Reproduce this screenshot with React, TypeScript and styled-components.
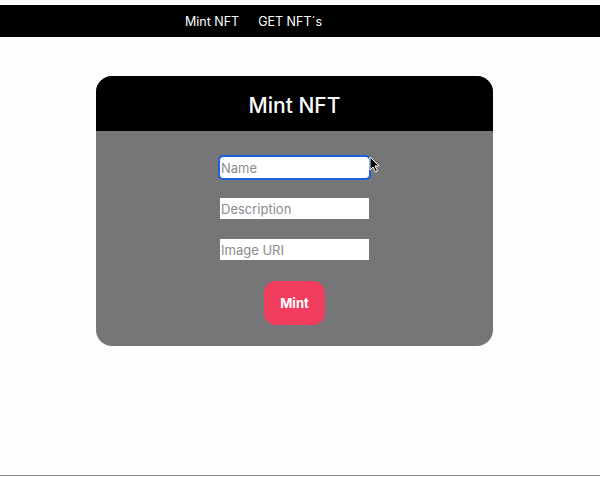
import React from 'react';
import styled, { createGlobalStyle } from 'styled-components';

const GlobalStyle = createGlobalStyle`
  html, body {
    margin: 0;
    padding: 0;
    background: #fdfcfe;
    font-family: Inter, "Liberation Sans", Arial, sans-serif;
  }
`;

const Page = styled.div`
  height: 476px;
  border-bottom: 1px solid #8a898c;
  padding-top: 5px;
  box-sizing: border-box;
`;

const NavBar = styled.nav`
  height: 32px;
  background: #000;
  display: flex;
  align-items: center;
  padding-left: 185px;
  gap: 19px;
`;

const NavLink = styled.a`
  color: #fff;
  font-size: 12.5px;
  text-decoration: none;
  cursor: pointer;
`;

const Card = styled.section`
  width: 397px;
  margin: 39px 0 0 96px;
  border-radius: 16px;
  overflow: hidden;
  background: #767577;
`;

const CardHeader = styled.h1`
  margin: 0;
  height: 55px;
  background: #000;
  color: #fff;
  font-size: 21px;
  font-weight: 500;
  display: flex;
  align-items: center;
  justify-content: center;
  padding-top: 3px;
  box-sizing: border-box;
`;

const Form = styled.form`
  display: flex;
  flex-direction: column;
  align-items: center;
  padding: 26px 0 21px 0;
  gap: 20px;
`;

const Field = styled.div`
  position: relative;
  height: 21px;
`;

const Input = styled.input<{ $focused?: boolean }>`
  display: block;
  width: 149px;
  height: 21px;
  box-sizing: border-box;
  border: none;
  outline: ${(p) => (p.$focused ? '2px solid #1a63d8' : 'none')};
  outline-offset: 0;
  border-radius: ${(p) => (p.$focused ? '3px' : '0')};
  background: #fff;
  padding: 0 1px;
  font-family: inherit;
  font-size: 13px;
  color: #222;
  &::placeholder {
    color: #8b8a90;
  }
`;

const Cursor = styled.svg`
  position: absolute;
  left: 149px;
  top: -1px;
  width: 11px;
  height: 17px;
  pointer-events: none;
`;

const MintButton = styled.button`
  margin-top: 1px;
  width: 61px;
  height: 44px;
  border: none;
  border-radius: 12px;
  background: #f03d5e;
  color: #fff;
  font-family: inherit;
  font-weight: 700;
  font-size: 13px;
  cursor: pointer;
`;

export default function App() {
  return (
    <>
      <GlobalStyle />
      <Page>
        <NavBar>
          <NavLink>Mint NFT</NavLink>
          <NavLink>GET NFT´s</NavLink>
        </NavBar>
        <Card>
          <CardHeader>Mint NFT</CardHeader>
          <Form onSubmit={(e) => e.preventDefault()}>
            <Field>
              <Input $focused placeholder="Name" />
              <Cursor viewBox="0 0 11 17">
                <path d="M1 1 L1 14 L4 11 L6.5 16 L8.5 15 L6 10 L10 10 Z" fill="#000" stroke="#fff" strokeWidth="1" />
              </Cursor>
            </Field>
            <Field>
              <Input placeholder="Description" />
            </Field>
            <Field>
              <Input placeholder="Image URI" />
            </Field>
            <MintButton type="submit">Mint</MintButton>
          </Form>
        </Card>
      </Page>
    </>
  );
}
